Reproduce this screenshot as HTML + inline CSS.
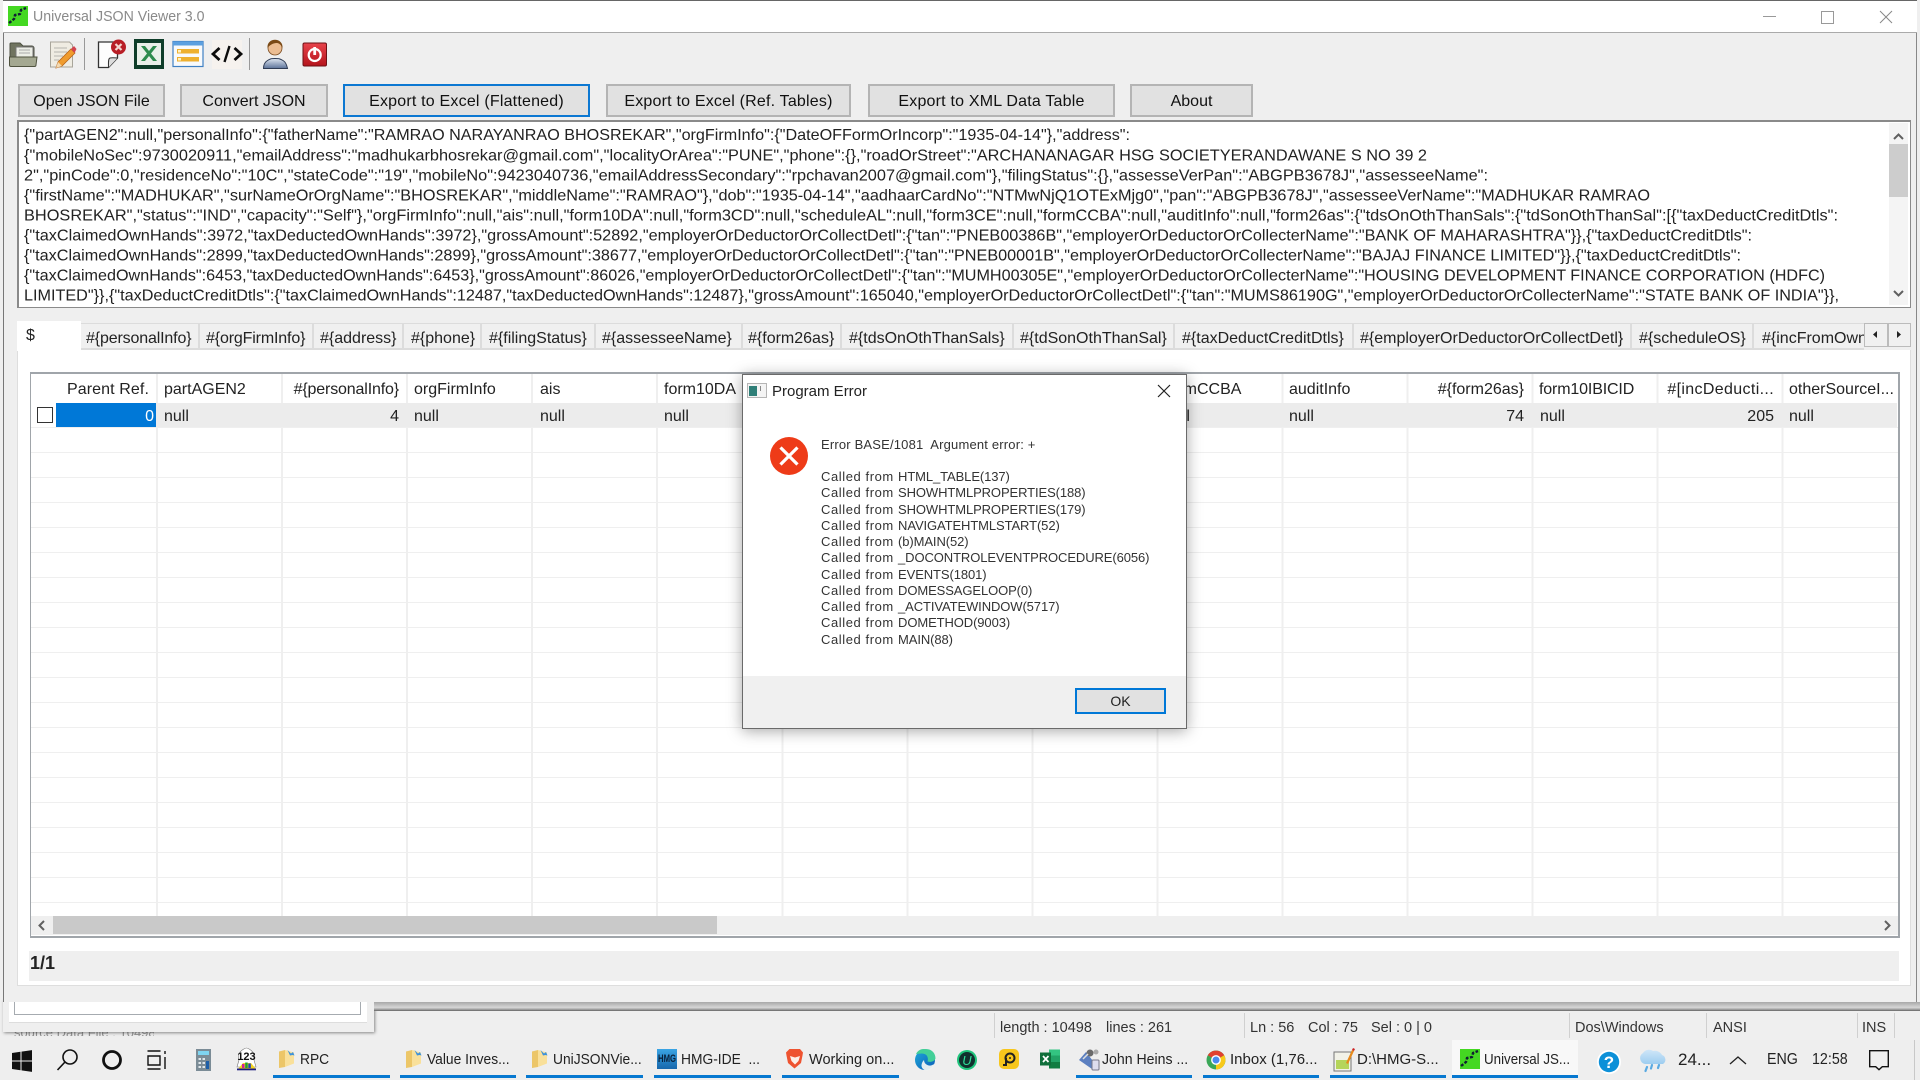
<!DOCTYPE html>
<html><head><meta charset="utf-8"><title>Universal JSON Viewer 3.0</title>
<style>
html,body{margin:0;padding:0;width:1920px;height:1080px;overflow:hidden;background:#efefef;font-family:"Liberation Sans",sans-serif;color:#222}
div,span,svg{position:absolute}
.t{white-space:nowrap;font-size:16px;line-height:20px;height:20px}
.k{letter-spacing:-.15px}
.r{text-align:right}
.b{background:#e1e1e1;border:2px solid #b4b4b4;box-sizing:border-box;text-align:center;font-size:16px;line-height:31px;top:84px;height:33px;color:#111}
.w{letter-spacing:.2px}
.tb{font-size:15px;line-height:20px;height:20px;top:1050px;white-space:nowrap;color:#222;transform:scaleX(.92);transform-origin:left center}
.u{top:1075px;height:3px;background:#0678d0}
.s{top:1013px;height:25px;width:1px;background:#d0d0d0}
.st{top:1019px;font-size:14.5px;line-height:18px;height:18px;white-space:nowrap;color:#333}
.tabsep{top:323px;width:2px;height:27px;background:#dcdcdc}
.d{left:821px;font-size:13px;line-height:16px;height:16px;white-space:nowrap;color:#333;letter-spacing:-.1px}
.d i{font-style:normal;letter-spacing:.58px}
</style></head><body>

<!-- window behind, bottom left -->
<div style="left:3px;top:1000px;width:371px;height:32px;background:#efefef;box-shadow:1px 1px 3px #888"></div>
<div style="left:9px;top:1000px;width:358px;height:22px;background:#fff;border-bottom:1px solid #ddd"></div>
<div style="left:14px;top:1000px;width:347px;height:15px;border:1px solid #a6abb0;border-top:0;box-sizing:border-box;background:#fff"></div>
<div style="left:14px;top:1032px;width:140px;height:4px;overflow:hidden;opacity:.45;font-size:13px;line-height:2px;white-space:nowrap">source Data File : 10498</div>

<!-- main window -->
<div style="left:3px;top:0;width:1914px;height:1002px;background:#efefef;border-left:1px solid #777;border-right:1px solid #888;box-sizing:border-box"></div>
<div style="left:374px;top:1002px;width:1546px;height:8px;background:linear-gradient(#a8a8a8,#d6d6d6 70%,#8c8c8c)"></div>
<div style="left:374px;top:1010px;width:1546px;height:1px;background:#777"></div>
<div style="left:3px;top:0;width:1914px;height:33px;background:#fff;border-top:1px solid #666;border-bottom:1px solid #aaa;box-sizing:border-box"></div>

<!-- title icon -->
<svg style="left:8px;top:6px" width="20" height="20" viewBox="0 0 20 20"><rect width="20" height="20" fill="#44d822"/><path d="M1 17 L6 13 L7 9 L12 8 L13 4 L18 2" stroke="#123" stroke-width="2.4" fill="none" stroke-dasharray="3 1.5"/></svg>
<div class="t" style="left:33px;top:7px;color:#8a8a8a;font-size:15px;transform:scaleX(.945);transform-origin:left center">Universal JSON Viewer 3.0</div>
<!-- window controls -->
<svg style="left:1750px;top:6px" width="160" height="22" viewBox="0 0 160 22"><path d="M13 10.500h13" stroke="#999"/><rect x="71.500" y="5.500" width="12" height="12" fill="none" stroke="#999"/><path d="M130 5l12 12M142 5l-12 12" stroke="#888" fill="none"/></svg>

<!-- toolbar -->
<svg style="left:0;top:36px" width="340" height="36" viewBox="0 36 340 36">
<defs>
<linearGradient id="uu" x1="0" y1="0" x2="0" y2="1"><stop offset="0" stop-color="#dfe7f2"/><stop offset="1" stop-color="#5c7299"/></linearGradient>
<linearGradient id="rr" x1="0" y1="0" x2="0" y2="1"><stop offset="0" stop-color="#e8434b"/><stop offset="1" stop-color="#b4141c"/></linearGradient>
</defs>
<!-- folder -->
<path d="M11 43h9l3 3h9c1 0 2 1 2 2v9H10V44c0-.6.4-1 1-1z" fill="#70745f" stroke="#4c4f40"/>
<rect x="16" y="47" width="17" height="12" fill="#eceee6" stroke="#777"/><path d="M19 50h11M19 53h11" stroke="#aaa"/>
<path d="M9.500 57h27.500l-1 8c0 1-.8 1.500-1.500 1.500h-23.500c-.8 0-1.500-.5-1.500-1.500z" fill="#a4a891" stroke="#50533f"/>
<!-- notepad -->
<path d="M50.500 42h19l3 3v22h-22z" fill="#efece2" stroke="#a8a59a"/><path d="M54 48h13M54 52h13M54 56h9M54 60h5" stroke="#b5b5ae"/>
<path d="M58 62l13-13 4 4-13 13-6 2z" fill="#f09c2e" stroke="#b8651a" stroke-width=".8"/><path d="M71 49l3-3 2.500 3-2 4z" fill="#d2434f"/><path d="M56 68l2-6 4 4z" fill="#f2d9b0"/>
<path d="M84.500 38v32" stroke="#999"/>
<!-- doc -->
<path d="M98.500 42h19v16l-9 9.500H98.500z" fill="#fdfdfd" stroke="#333" stroke-width="1.300"/><path d="M108.500 67.500c0-4-.5-9 1.500-9.500s6 0 7.500 0" fill="#ddd" stroke="#333"/>
<circle cx="118.500" cy="47" r="7.500" fill="#b81e26"/><path d="M115.500 44l6 6M121.500 44l-6 6" stroke="#f3d6d0" stroke-width="2.200"/>
<!-- excel -->
<rect x="134" y="39" width="30" height="30" fill="#0e3d29"/><rect x="137" y="43" width="24" height="22" fill="#e9f0e9"/>
<path d="M141 46h4l4 5 4-5h4l-6 7.500 6 7.500h-4l-4-5-4 5h-4l6-7.500z" fill="#2d8b4d"/>
<!-- list -->
<rect x="173" y="41.500" width="30" height="25" fill="#f8fafc" stroke="#3f80c4" stroke-width="1.200"/><rect x="173" y="41.500" width="30" height="4" fill="#5ca0e0"/><rect x="177" y="49" width="22" height="4.500" fill="#eeb02f"/><rect x="177" y="57" width="22" height="4.500" fill="#eeb02f"/><rect x="178" y="50" width="3" height="2.500" fill="#fff2c5"/><rect x="178" y="58" width="3" height="2.500" fill="#fff2c5"/>
<!-- code -->
<rect x="212" y="40" width="30" height="29" fill="#f6f2ee"/>
<path d="M219.500 48l-6.500 6 6.500 6M234.500 48l6.500 6-6.500 6" stroke="#0c0c0c" stroke-width="2.800" fill="none"/><path d="M229.500 46l-5 16" stroke="#0c0c0c" stroke-width="2.400"/>
<path d="M249.500 38v32" stroke="#999"/>
<!-- user -->
<path d="M263.500 68.500c0-2 .5-6 4-8s3.500-2 7.500-2 4.500 0 8 2 4 6 4.500 8z" fill="url(#uu)" stroke="#2f3c55"/>
<circle cx="275" cy="48" r="7" fill="#ecbd92" stroke="#7a4a1e" stroke-width=".8"/><path d="M267.500 48c-1-11 16-11 15 0c-2-4-4-5-6-5c-3 0-7 2-9 5z" fill="#7a4a16"/>
<!-- power -->
<rect x="303" y="43" width="23.500" height="23" rx="1.500" fill="url(#rr)" stroke="#6e1015"/><circle cx="314.700" cy="55" r="6" fill="none" stroke="#fff" stroke-width="2.200"/><path d="M314.700 47v8" stroke="#fff" stroke-width="2.800"/>
</svg>

<!-- buttons -->
<div class="b" style="left:18px;width:147px">Open JSON File</div>
<div class="b" style="left:180px;width:148px">Convert JSON</div>
<div class="b w" style="left:343px;width:247px;border-color:#0c78d2">Export to Excel (Flattened)</div>
<div class="b w" style="left:606px;width:245px">Export to Excel (Ref. Tables)</div>
<div class="b w" style="left:868px;width:247px">Export to XML Data Table</div>
<div class="b" style="left:1130px;width:123px">About</div>

<!-- editor -->
<div style="left:17px;top:120px;width:1894px;height:188px;background:#fff;border:1px solid #8a8a8a;border-width:2px 1px 1px 2px;box-sizing:border-box"></div>
<svg style="left:0;top:120px" width="1888" height="188" viewBox="0 120 1888 188" font-family="Liberation Sans" font-size="16" fill="#222">
<text x="24" y="140" textLength="1106" lengthAdjust="spacingAndGlyphs">{"partAGEN2":null,"personalInfo":{"fatherName":"RAMRAO NARAYANRAO BHOSREKAR","orgFirmInfo":{"DateOFFormOrIncorp":"1935-04-14"},"address":</text>
<text x="24" y="160.400" textLength="1403" lengthAdjust="spacingAndGlyphs">{"mobileNoSec":9730020911,"emailAddress":"madhukarbhosrekar@gmail.com","localityOrArea":"PUNE","phone":{},"roadOrStreet":"ARCHANANAGAR HSG SOCIETYERANDAWANE S NO 39 2</text>
<text x="24" y="180.500" textLength="1464" lengthAdjust="spacingAndGlyphs">2","pinCode":0,"residenceNo":"10C","stateCode":"19","mobileNo":9423040736,"emailAddressSecondary":"rpchavan2007@gmail.com"},"filingStatus":{},"assesseVerPan":"ABGPB3678J","assesseeName":</text>
<text x="24" y="200.500" textLength="1626" lengthAdjust="spacingAndGlyphs">{"firstName":"MADHUKAR","surNameOrOrgName":"BHOSREKAR","middleName":"RAMRAO"},"dob":"1935-04-14","aadhaarCardNo":"NTMwNjQ1OTExMjg0","pan":"ABGPB3678J","assesseeVerName":"MADHUKAR RAMRAO</text>
<text x="24" y="220.500" textLength="1814" lengthAdjust="spacingAndGlyphs">BHOSREKAR","status":"IND","capacity":"Self"},"orgFirmInfo":null,"ais":null,"form10DA":null,"form3CD":null,"scheduleAL":null,"form3CE":null,"formCCBA":null,"auditInfo":null,"form26as":{"tdsOnOthThanSals":{"tdSonOthThanSal":[{"taxDeductCreditDtls":</text>
<text x="24" y="240.500" textLength="1728" lengthAdjust="spacingAndGlyphs">{"taxClaimedOwnHands":3972,"taxDeductedOwnHands":3972},"grossAmount":52892,"employerOrDeductorOrCollectDetl":{"tan":"PNEB00386B","employerOrDeductorOrCollecterName":"BANK OF MAHARASHTRA"}},{"taxDeductCreditDtls":</text>
<text x="24" y="260.500" textLength="1717" lengthAdjust="spacingAndGlyphs">{"taxClaimedOwnHands":2899,"taxDeductedOwnHands":2899},"grossAmount":38677,"employerOrDeductorOrCollectDetl":{"tan":"PNEB00001B","employerOrDeductorOrCollecterName":"BAJAJ FINANCE LIMITED"}},{"taxDeductCreditDtls":</text>
<text x="24" y="280.500" textLength="1801" lengthAdjust="spacingAndGlyphs">{"taxClaimedOwnHands":6453,"taxDeductedOwnHands":6453},"grossAmount":86026,"employerOrDeductorOrCollectDetl":{"tan":"MUMH00305E","employerOrDeductorOrCollecterName":"HOUSING DEVELOPMENT FINANCE CORPORATION (HDFC)</text>
<text x="24" y="300.500" textLength="1815" lengthAdjust="spacingAndGlyphs">LIMITED"}},{"taxDeductCreditDtls":{"taxClaimedOwnHands":12487,"taxDeductedOwnHands":12487},"grossAmount":165040,"employerOrDeductorOrCollectDetl":{"tan":"MUMS86190G","employerOrDeductorOrCollecterName":"STATE BANK OF INDIA"}},</text>
</svg>
<!-- editor scrollbar -->
<div style="left:1889px;top:123px;width:19px;height:182px;background:#f4f4f4"></div>
<div style="left:1889px;top:144px;width:19px;height:53px;background:#cdcdcd"></div>
<svg style="left:1889px;top:123px" width="19" height="182" viewBox="0 0 19 182"><path d="M5 16l4.500-4.500L14 16M5 168l4.500 4.500L14 168" stroke="#606060" stroke-width="2" fill="none"/></svg>

<!-- tabs -->
<div style="left:17px;top:350px;width:1894px;height:636px;background:#fff;border:1px solid #dedede;border-top:0;box-sizing:border-box"></div>
<div style="left:81px;top:323px;width:1783px;height:27px;background:#f0f0f0;border-top:1px solid #dcdcdc;border-bottom:2px solid #dcdcdc;box-sizing:border-box"></div>
<div style="left:17px;top:321px;width:64px;height:30px;background:#fff"></div>
<div class="t" style="left:26px;top:326px">$</div>
<div class="tabsep" style="left:198px"></div><div class="tabsep" style="left:312px"></div><div class="tabsep" style="left:402px"></div><div class="tabsep" style="left:480px"></div><div class="tabsep" style="left:594px"></div><div class="tabsep" style="left:741px"></div><div class="tabsep" style="left:840px"></div><div class="tabsep" style="left:1012px"></div><div class="tabsep" style="left:1173px"></div><div class="tabsep" style="left:1352px"></div><div class="tabsep" style="left:1630px"></div><div class="tabsep" style="left:1752px"></div>
<div class="t k" style="left:86px;top:329px">#{personalInfo}</div>
<div class="t k" style="left:206px;top:329px">#{orgFirmInfo}</div>
<div class="t" style="left:320px;top:329px">#{address}</div>
<div class="t" style="left:411px;top:329px">#{phone}</div>
<div class="t" style="left:489px;top:329px">#{filingStatus}</div>
<div class="t" style="left:602px;top:329px">#{assesseeName}</div>
<div class="t" style="left:748px;top:329px">#{form26as}</div>
<div class="t" style="left:849px;top:329px">#{tdsOnOthThanSals}</div>
<div class="t" style="left:1020px;top:329px">#{tdSonOthThanSal}</div>
<div class="t" style="left:1182px;top:329px">#{taxDeductCreditDtls}</div>
<div class="t" style="left:1360px;top:329px">#{employerOrDeductorOrCollectDetl}</div>
<div class="t" style="left:1639px;top:329px">#{scheduleOS}</div>
<div style="left:1762px;top:329px;width:102px;height:20px;overflow:hidden"><div class="t" style="left:0;top:0">#{incFromOwnHP}</div></div>
<div style="left:1864px;top:323px;width:24px;height:24px;background:#f0f0f0;border:1px solid #bbb;box-sizing:border-box"></div>
<div style="left:1888px;top:323px;width:23px;height:24px;background:#f0f0f0;border:1px solid #bbb;box-sizing:border-box"></div>
<svg style="left:1864px;top:323px" width="47" height="24" viewBox="0 0 47 24"><path d="M13 8v7l-4-3.500zM33 8v7l4-3.500z" fill="#222"/></svg>

<!-- grid -->
<div style="left:30px;top:372px;width:1870px;height:566px;background:#fff;border:1px solid #a0a5aa;border-width:2px 2px 2px 1px;box-sizing:border-box"></div>
<div style="left:31px;top:452px;width:1867px;height:464px;background:repeating-linear-gradient(180deg,#efefef 0 1px,transparent 1px 25px)"></div>
<div style="left:156px;top:374px;width:1742px;height:542px;background:repeating-linear-gradient(90deg,#efefef 0 2px,transparent 2px 125.050px)"></div>
<div style="left:56px;top:403px;width:1841px;height:24px;background:#ececec"></div>
<div style="left:56px;top:403px;width:100px;height:24px;background:#0078d7"></div>
<div style="left:37px;top:407px;width:16px;height:16px;background:#fff;border:1px solid #333;box-sizing:border-box"></div>
<div style="left:31px;top:427px;width:1867px;height:1px;background:#efefef"></div>

<div class="t r" style="left:49px;width:100px;top:380px;letter-spacing:.1px">Parent Ref.</div>
<div class="t" style="left:164px;top:380px">partAGEN2</div>
<div class="t r k" style="left:270px;width:129px;top:380px">#{personalInfo}</div>
<div class="t" style="left:414px;top:380px">orgFirmInfo</div>
<div class="t" style="left:540px;top:380px">ais</div>
<div class="t" style="left:664px;top:380px">form10DA</div>
<div class="t" style="left:1165px;top:380px">formCCBA</div>
<div class="t" style="left:1289px;top:380px">auditInfo</div>
<div class="t r" style="left:1424px;width:100px;top:380px">#{form26as}</div>
<div class="t k" style="left:1539px;top:380px">form10IBICID</div>
<div class="t r" style="left:1654px;width:120px;top:380px;letter-spacing:.35px">#[incDeducti...</div>
<div class="t" style="left:1789px;top:380px">otherSourceI...</div>

<div class="t r" style="left:100px;width:54px;top:407px;color:#fff">0</div>
<div class="t" style="left:164px;top:407px">null</div>
<div class="t r" style="left:300px;width:99px;top:407px">4</div>
<div class="t" style="left:414px;top:407px">null</div>
<div class="t" style="left:540px;top:407px">null</div>
<div class="t" style="left:664px;top:407px">null</div>
<div class="t" style="left:1165px;top:407px">null</div>
<div class="t" style="left:1289px;top:407px">null</div>
<div class="t r" style="left:1424px;width:100px;top:407px">74</div>
<div class="t" style="left:1540px;top:407px">null</div>
<div class="t r" style="left:1674px;width:100px;top:407px">205</div>
<div class="t" style="left:1789px;top:407px">null</div>

<!-- grid hscroll -->
<div style="left:31px;top:916px;width:1867px;height:19px;background:#efefef"></div>
<div style="left:53px;top:916px;width:664px;height:18px;background:#c9c9c9"></div>
<svg style="left:31px;top:916px" width="1867" height="19" viewBox="0 0 1867 19"><path d="M13 5L8.500 9.500 13 14M1854 5l4.500 4.500L1854 14" stroke="#606060" stroke-width="2" fill="none"/></svg>

<!-- page indicator -->
<div style="left:29px;top:951px;width:1870px;height:30px;background:#efefef"></div>
<div class="t" style="left:30px;top:951px;font-weight:bold;font-size:18px;line-height:24px;height:24px;color:#222">1/1</div>

<!-- status bar -->
<div class="s" style="left:994px"></div><div class="s" style="left:1244px"></div><div class="s" style="left:1569px"></div><div class="s" style="left:1706px"></div><div class="s" style="left:1857px"></div><div class="s" style="left:1894px"></div>
<div class="st" style="left:1000px">length : 10498</div>
<div class="st" style="left:1106px">lines : 261</div>
<div class="st" style="left:1250px">Ln : 56</div>
<div class="st" style="left:1308px">Col : 75</div>
<div class="st" style="left:1371px">Sel : 0 | 0</div>
<div class="st" style="left:1575px">Dos\Windows</div>
<div class="st" style="left:1713px">ANSI</div>
<div class="st" style="left:1862px">INS</div>

<!-- dialog -->
<div style="left:742px;top:374px;width:445px;height:355px;background:#fff;border:1px solid #6a6a6a;box-sizing:border-box;box-shadow:0 2px 14px rgba(0,0,0,.35)"></div>
<div style="left:743px;top:676px;width:443px;height:52px;background:#f0f0f0"></div>
<svg style="left:747px;top:383px" width="20" height="15" viewBox="0 0 20 15"><rect x=".5" y=".5" width="19" height="14" fill="#f4f4f4" stroke="#b5b5b5"/><rect x="2" y="3" width="8" height="10" fill="#2f7f78"/><rect x="13" y="3" width="1" height="5" fill="#888"/></svg>
<div class="t" style="left:772px;top:382px;font-size:15px;color:#222">Program Error</div>
<svg style="left:1157px;top:384px" width="14" height="14" viewBox="0 0 14 14"><path d="M1 1l12 12M13 1L1 13" stroke="#222" stroke-width="1.200"/></svg>
<svg style="left:770px;top:437px" width="38" height="38" viewBox="0 0 38 38"><circle cx="19" cy="19" r="19" fill="#ee3b18"/><path d="M10.500 10.500l17 17M27.500 10.500l-17 17" stroke="#fff" stroke-width="3.200"/></svg>
<div class="d" style="top:437px;letter-spacing:.18px">Error BASE/1081&nbsp; Argument error: +</div>
<div class="d" style="top:469px"><i>Called from </i>HTML_TABLE(137)</div>
<div class="d" style="top:485px"><i>Called from </i>SHOWHTMLPROPERTIES(188)</div>
<div class="d" style="top:502px"><i>Called from </i>SHOWHTMLPROPERTIES(179)</div>
<div class="d" style="top:518px"><i>Called from </i>NAVIGATEHTMLSTART(52)</div>
<div class="d" style="top:534px"><i>Called from </i>(b)MAIN(52)</div>
<div class="d" style="top:550px"><i>Called from </i>_DOCONTROLEVENTPROCEDURE(6056)</div>
<div class="d" style="top:567px"><i>Called from </i>EVENTS(1801)</div>
<div class="d" style="top:583px"><i>Called from </i>DOMESSAGELOOP(0)</div>
<div class="d" style="top:599px"><i>Called from </i>_ACTIVATEWINDOW(5717)</div>
<div class="d" style="top:615px"><i>Called from </i>DOMETHOD(9003)</div>
<div class="d" style="top:632px"><i>Called from </i>MAIN(88)</div>
<div style="left:1075px;top:688px;width:91px;height:26px;background:#e1e1e1;border:2px solid #0078d7;box-sizing:border-box;text-align:center;font-size:14px;line-height:23px;color:#222">OK</div>

<!-- taskbar -->
<div style="left:0;top:1040px;width:1920px;height:40px;background:#eeeeee"></div>
<div style="left:1452px;top:1040px;width:126px;height:38px;background:#f8f8f8"></div>
<div style="left:1914px;top:1040px;width:1px;height:40px;background:#c8c8c8"></div>
<svg style="left:0;top:1040px" width="1920" height="40" viewBox="0 1040 1920 40">
<defs>
<linearGradient id="eg" x1="0" y1="0" x2="1" y2="1"><stop offset="0" stop-color="#1fa8d8"/><stop offset="1" stop-color="#0b5cb8"/></linearGradient>
<linearGradient id="cl" x1="0" y1="0" x2="0" y2="1"><stop offset="0" stop-color="#cfe6f8"/><stop offset="1" stop-color="#9dcdf0"/></linearGradient>
<linearGradient id="hm" x1="0" y1="0" x2="0" y2="1"><stop offset="0" stop-color="#3aa4e4"/><stop offset="1" stop-color="#1767ac"/></linearGradient>
</defs>
<path d="M12 1053l8.500-1.200v8.700H12zM21.500 1051.600l10.500-1.500v10.400H21.500zM12 1061.500h8.500v8.700L12 1069zM21.500 1061.500H32v10.400l-10.500-1.500z" fill="#111"/>
<circle cx="70" cy="1057" r="7" fill="none" stroke="#111" stroke-width="1.600"/><path d="M65 1062l-7.500 8" stroke="#111" stroke-width="1.600"/>
<circle cx="112" cy="1060" r="8.500" fill="none" stroke="#111" stroke-width="2.800"/>
<path d="M147.500 1051h13M147.500 1069h13M148 1056h12v9h-12zM165 1051v3M165 1057v12" stroke="#111" stroke-width="1.400" fill="none"/>
<rect x="196" y="1049" width="15" height="22" fill="#7b8c96"/><rect x="198" y="1051" width="11" height="4" fill="#7fd4f0"/><path d="M198.500 1058h2.500v2h-2.500zM202.500 1058h2.500v2h-2.500zM198.500 1062h2.500v2h-2.500zM202.500 1062h2.500v2h-2.500zM198.500 1066h2.500v2h-2.500zM202.500 1066h2.500v2h-2.500z" fill="#dfe6ea"/><rect x="206" y="1061" width="3" height="8" fill="#1d5fa8"/>
<!-- 123 icon -->
<path d="M239 1060c-3-8 6-12 7.500-12s10 4 7.500 12l2 7h-19z" fill="#fff" stroke="#777" stroke-width=".6"/>
<text x="246.500" y="1060" font-family="Liberation Sans" font-size="11" font-weight="bold" fill="#111" text-anchor="middle">123</text>
<path d="M238 1069l5-6h8l5 6z" fill="#f4d41c"/><rect x="242" y="1064" width="2.500" height="4" fill="#d0209a"/><rect x="245.200" y="1062.500" width="2.500" height="5.500" fill="#20a030"/><rect x="248.300" y="1063.500" width="2.500" height="4.500" fill="#2040c0"/><rect x="237" y="1068.500" width="19" height="1.800" fill="#1a1a80"/>
<!-- folders -->
<g id="f"><path d="M279 1051.500l6-1.500v17l-6 1z" fill="#ecc668"/><path d="M285 1050l9 2.500v11l-9 3.500z" fill="#f9e09a"/><path d="M287.500 1050l3.500 3.500 2-1.500 1.500 3.500-2-.5-2.500.5z" fill="#3d92dc"/></g>
<use href="#f" x="127"/><use href="#f" x="253"/>
<!-- HMG -->
<rect x="657" y="1049" width="20" height="20" fill="url(#hm)"/><text x="658" y="1062" font-family="Liberation Sans" font-size="11" font-weight="bold" fill="#08203a" textLength="18" lengthAdjust="spacingAndGlyphs">HMG</text>
<!-- brave -->
<path d="M789.500 1049h10.500l3 3.500-.5 3-1.500 7.500-6.500 5.500-6.500-5.500-1.500-7.500-.5-3z" fill="#ee5330"/><path d="M790 1056l5 1.500 5-1.500-1.500 5-3.500 3.500-3.500-3.500z" fill="#fdf0e8"/>
<!-- edge -->
<circle cx="925" cy="1060" r="10" fill="url(#eg)"/>
<path d="M916 1054c3-6 8-5 10-5c6 0 9.500 4.500 9.500 9.500c-1 3-5 4-8 3c1-3 0-6.500-3-7.500c-3-1-6 0-8.500 0z" fill="#43cf98"/>
<path d="M924 1060c0 4 4 6 7 5.500l3.500-1.500c-1 4-3.500 6-8 6.500-3-.5-4.500-2-5-4.500 0-3 1.500-5 2.500-6z" fill="#eef3f2" opacity=".95"/>
<!-- upwork -->
<circle cx="967" cy="1060" r="10" fill="#1fc47c"/><circle cx="967" cy="1060" r="8" fill="#11302e"/><text x="967" y="1065" font-family="Liberation Sans" font-size="13" font-style="italic" fill="#2fe09a" text-anchor="middle">U</text>
<!-- yellow -->
<rect x="999" y="1049" width="20" height="20" rx="5" fill="#f7c61c"/><circle cx="1010" cy="1058" r="4.500" fill="none" stroke="#222" stroke-width="2"/><path d="M1006 1058v7h-3" stroke="#222" stroke-width="2" fill="none"/><circle cx="1010" cy="1058" r="1" fill="#222"/>
<!-- excel -->
<rect x="1049" y="1049.500" width="11" height="19" fill="#21a366"/><rect x="1049" y="1049.500" width="11" height="6" fill="#33c481"/><rect x="1049" y="1062" width="11" height="6.500" fill="#107c41"/><rect x="1040" y="1052.500" width="11" height="13" fill="#0f6e3a"/><path d="M1043 1056l5.500 6M1048.500 1056l-5.500 6" stroke="#fff" stroke-width="1.700"/>
<!-- john heins icon -->
<path d="M1079 1060l7-8 10 13-4 4z" fill="#5b7fc0"/><circle cx="1090" cy="1053" r="3.500" fill="#6a6a6a"/><circle cx="1096" cy="1052" r="2.500" fill="#aaa"/><rect x="1092" y="1060" width="7" height="10" rx="1" fill="#dde" stroke="#778"/><path d="M1083 1059l5-5" stroke="#ddd" stroke-width="1.500"/>
<!-- chrome -->
<circle cx="1216" cy="1060" r="9.500" fill="#3aa757"/><path d="M1216 1060l8.200-4.700A9.500 9.500 0 0 0 1207.800 1055.300z" fill="#e04030"/><path d="M1216 1060l8.200-4.700a9.500 9.500 0 0 1-8.200 14.200z" fill="#f8c91a"/><circle cx="1216" cy="1060" r="4.200" fill="#4a8bf0" stroke="#fff" stroke-width="1.400"/>
<!-- notepad -->
<rect x="1334" y="1052" width="17" height="19" fill="#f2f2e8" stroke="#777"/><rect x="1336" y="1060" width="13" height="9" fill="#b5d55a"/><path d="M1346 1063l6-13 2 1-6 13z" fill="#e68a1c"/><path d="M1352 1050l1-2 2 1-1 2z" fill="#c22"/>
<!-- universal -->
<rect x="1460" y="1049" width="20" height="20" fill="#44d822"/><path d="M1461 1066l5-4 1-4 5-1 1-4 5-2" stroke="#123" stroke-width="2.400" fill="none" stroke-dasharray="3 1.500"/>
<!-- help -->
<circle cx="1609" cy="1062" r="12" fill="#fff"/><circle cx="1609" cy="1062" r="10.200" fill="#0c90d8"/><text x="1609" y="1068" font-family="Liberation Sans" font-size="17" font-weight="bold" fill="#fff" text-anchor="middle">?</text>
<!-- cloud -->
<path d="M1645 1064a6 6 0 0 1-2-11a7 7 0 0 1 10-2a8 8 0 0 1 9 4a5 5 0 0 1 1 9z" fill="url(#cl)"/><path d="M1647 1067l-1.500 4M1652 1065l-1 3.500M1659 1065l-1 3" stroke="#5aaae2" stroke-width="2.200" stroke-linecap="round"/>
<!-- caret -->
<path d="M1730 1064l8-7 8 7" fill="none" stroke="#222" stroke-width="1.300"/>
<!-- notification -->
<path d="M1869.700 1050.700h18.600v16h-6l-3.300 3-3.300-3h-6z" fill="none" stroke="#111" stroke-width="1.400"/>
</svg>
<div class="u" style="left:273px;width:117px"></div><div class="u" style="left:400px;width:116px"></div><div class="u" style="left:526px;width:117px"></div><div class="u" style="left:654px;width:117px"></div><div class="u" style="left:782px;width:117px"></div><div class="u" style="left:1076px;width:116px"></div><div class="u" style="left:1203px;width:116px"></div><div class="u" style="left:1330px;width:116px"></div><div class="u" style="left:1452px;width:126px"></div>
<div class="tb" style="left:300px">RPC</div>
<div class="tb" style="left:427px">Value Inves...</div>
<div class="tb" style="left:553px">UniJSONVie...</div>
<div class="tb" style="left:681px">HMG-IDE&nbsp; ...</div>
<div class="tb" style="left:809px;transform:scaleX(.97)">Working on...</div>
<div class="tb" style="left:1102px;transform:scaleX(.94)">John Heins ...</div>
<div class="tb" style="left:1230px;transform:scaleX(1)">Inbox (1,76...</div>
<div class="tb" style="left:1357px;transform:scaleX(1)">D:\HMG-S...</div>
<div class="tb" style="left:1484px;transform:scaleX(.89)">Universal JS...</div>
<div class="tb" style="left:1678px;font-size:17px;transform:none">24...</div>
<div class="tb" style="left:1767px;font-size:15.500px">ENG</div>
<div class="tb" style="left:1812px;font-size:15.500px">12:58</div>

</body></html>
